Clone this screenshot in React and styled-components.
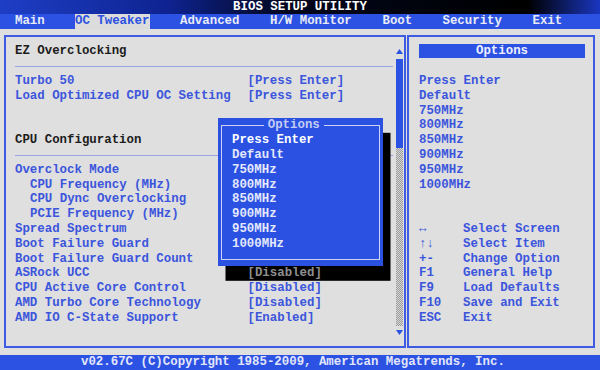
import React from 'react';
import styled, { createGlobalStyle } from 'styled-components';

const CW = 7.5;
const RH = 14.8;

const GlobalStyle = createGlobalStyle`
  html, body {
    margin: 0;
    padding: 0;
    background: #dfdfdf;
  }
  body {
    font-family: "Liberation Mono", "DejaVu Sans Mono", monospace;
    font-size: 12.4px;
    font-weight: 700;
  }
`;

const Screen = styled.div`
  position: relative;
  width: 600px;
  height: 370px;
  display: grid;
  grid-template-rows: 14px 15px 326px 15px;
  background: #dfdfdf;
  overflow: hidden;
`;

const TitleBar = styled.div`
  display: flex;
  justify-content: center;
  align-items: center;
  color: #ffffff;
  line-height: 14px;
  background: linear-gradient(90deg, #1e3ec6 0%, #0e2390 28%, #02061c 48%, #000 88%, #1a36c0 100%);
`;

const MenuBar = styled.div`
  display: grid;
  grid-template-columns: repeat(80, ${CW}px);
  align-items: stretch;
  background: #2b52e2;
  line-height: 15px;
`;

const MenuItem = styled.div`
  grid-column: ${p => p.$col + 1} / span ${p => p.$len};
  white-space: pre;
  color: ${p => (p.$active ? '#2b52e2' : '#e9ebf6')};
  background: ${p => (p.$active ? '#dcdcdc' : 'transparent')};
`;

const Main = styled.div`
  display: flex;
  padding: 6px 5px 7px 4px;
`;

const LeftPanel = styled.div`
  box-sizing: border-box;
  width: 402px;
  border: 2px solid #3d5ce3;
  padding: 7.4px 1px 0 9px;
  display: flex;
`;

const ItemList = styled.div`
  flex: 1;
  display: flex;
  flex-direction: column;
  padding-right: 3px;
`;

const Heading = styled.div`
  height: ${RH}px;
  line-height: ${RH}px;
  color: #1c1c1c;
`;

const Separator = styled.div`
  height: ${RH}px;
  display: flex;
  align-items: center;
  &::after {
    content: '';
    flex: 1;
    height: 1px;
    background: #97a4e6;
  }
`;

const Spacer = styled.div`
  height: ${p => p.$rows * RH}px;
`;

const Row = styled.div`
  display: grid;
  grid-template-columns: 232.5px 1fr;
  height: ${RH}px;
  line-height: ${RH}px;
  white-space: pre;
  color: #3b55dc;
`;

const Label = styled.span`
  padding-left: ${p => (p.$indent ? 2 * CW : 0)}px;
`;

const Value = styled.span`
  ${p => p.$shadow && `
    position: relative;
    z-index: 3;
    color: #8f8f8f;
  `}
`;

const ScrollBar = styled.div`
  width: 7px;
  display: flex;
  flex-direction: column;
  align-items: stretch;
`;

const ScrollArrow = styled.div`
  height: ${RH}px;
  display: flex;
  align-items: center;
  justify-content: center;
`;

const Thumb = styled.div`
  height: ${6 * RH}px;
  background: #2b52e2;
`;

const Track = styled.div`
  height: ${12 * RH}px;
  background: repeating-conic-gradient(#9c9c9c 0 25%, #d6d6d6 0 50%) 0 0 / 2px 2px;
`;

const RightPanel = styled.div`
  box-sizing: border-box;
  width: 188px;
  margin-left: 1px;
  border: 2px solid #3d5ce3;
  padding: 7.4px 8px 0 10px;
  display: flex;
  flex-direction: column;
  color: #3b55dc;
`;

const OptionsHeader = styled.div`
  height: 14px;
  line-height: 14px;
  text-align: center;
  color: #eef0ff;
  background: #2b52e2;
  margin-bottom: 0.8px;
`;

const Line = styled.div`
  height: ${RH}px;
  line-height: ${RH}px;
  white-space: pre;
`;

const HelpRow = styled.div`
  display: grid;
  grid-template-columns: 44px 1fr;
  height: ${RH}px;
  line-height: ${RH}px;
  white-space: pre;
`;

const Footer = styled.div`
  background: #2b52e2;
  color: #e3e6fb;
  line-height: 15px;
  white-space: pre;
  padding-left: 81px;
`;

const Popup = styled.div`
  position: absolute;
  left: 217.5px;
  top: 118.4px;
  width: 165px;
  height: 148px;
  box-sizing: border-box;
  padding: 0 3px 6.65px 3px;
  background: #2a51e2;
  box-shadow: ${CW}px ${RH}px 0 #000;
  z-index: 2;
  display: flex;
`;

const PopupFrame = styled.fieldset`
  flex: 1;
  margin: 0;
  min-width: 0;
  border: 1.5px solid #cdd2f2;
  padding: 0 8px 6.65px 10.5px;
`;

const PopupTitle = styled.legend`
  padding: 0 ${CW / 2}px;
  margin-left: 32px;
  height: ${RH}px;
  line-height: ${RH}px;
  color: #c3ccf4;
`;

const PopupItem = styled.div`
  height: ${RH}px;
  line-height: ${RH}px;
  color: ${p => (p.$active ? '#ffffff' : '#e4e8fb')};
`;

const Triangle = ({ up }) => (
  <svg width="7" height="5" viewBox="0 0 7 5">
    <polygon points={up ? '3.5,0 7,5 0,5' : '0,0 7,0 3.5,5'} fill="#2b52e2" />
  </svg>
);

const menu = [
  { name: 'Main', col: 2 },
  { name: 'OC Tweaker', col: 10, active: true },
  { name: 'Advanced', col: 24 },
  { name: 'H/W Monitor', col: 36 },
  { name: 'Boot', col: 51 },
  { name: 'Security', col: 59 },
  { name: 'Exit', col: 71 },
];

const cpuRows = [
  { label: 'Overclock Mode' },
  { label: 'CPU Frequency (MHz)', indent: true },
  { label: 'CPU Dync Overclocking', indent: true },
  { label: 'PCIE Frequency (MHz)', indent: true },
  { label: 'Spread Spectrum' },
  { label: 'Boot Failure Guard' },
  { label: 'Boot Failure Guard Count' },
  { label: 'ASRock UCC', value: '[Disabled]', shadow: true },
  { label: 'CPU Active Core Control', value: '[Disabled]' },
  { label: 'AMD Turbo Core Technology', value: '[Disabled]' },
  { label: 'AMD IO C-State Support', value: '[Enabled]' },
];

const options = ['Press Enter', 'Default', '750MHz', '800MHz', '850MHz', '900MHz', '950MHz', '1000MHz'];

const help = [
  ['↔', 'Select Screen'],
  ['↑↓', 'Select Item'],
  ['+-', 'Change Option'],
  ['F1', 'General Help'],
  ['F9', 'Load Defaults'],
  ['F10', 'Save and Exit'],
  ['ESC', 'Exit'],
];

export default function App() {
  return (
    <Screen>
      <GlobalStyle />
      <TitleBar>BIOS SETUP UTILITY</TitleBar>
      <MenuBar>
        {menu.map(m => (
          <MenuItem key={m.name} $col={m.col} $len={m.name.length} $active={m.active}>
            {m.name}
          </MenuItem>
        ))}
      </MenuBar>

      <Main>
        <LeftPanel>
          <ItemList>
            <Heading>EZ Overclocking</Heading>
            <Separator />
            <Row>
              <Label>Turbo 50</Label>
              <Value>[Press Enter]</Value>
            </Row>
            <Row>
              <Label>Load Optimized CPU OC Setting</Label>
              <Value>[Press Enter]</Value>
            </Row>
            <Spacer $rows={2} />
            <Heading>CPU Configuration</Heading>
            <Separator />
            {cpuRows.map(r => (
              <Row key={r.label}>
                <Label $indent={r.indent}>{r.label}</Label>
                <Value $shadow={r.shadow}>{r.value || ''}</Value>
              </Row>
            ))}
          </ItemList>
          <ScrollBar>
            <ScrollArrow><Triangle up /></ScrollArrow>
            <Thumb />
            <Track />
            <ScrollArrow><Triangle /></ScrollArrow>
          </ScrollBar>
        </LeftPanel>

        <RightPanel>
          <OptionsHeader>Options</OptionsHeader>
          <Spacer $rows={1} />
          {options.map(o => (
            <Line key={o}>{o}</Line>
          ))}
          <Spacer $rows={2} />
          {help.map(([k, d]) => (
            <HelpRow key={d}>
              <span>{k}</span>
              <span>{d}</span>
            </HelpRow>
          ))}
        </RightPanel>
      </Main>

      <Footer>v02.67C (C)Copyright 1985-2009, American Megatrends, Inc.</Footer>

      <Popup>
        <PopupFrame>
          <PopupTitle>Options</PopupTitle>
          {options.map((o, i) => (
            <PopupItem key={o} $active={i === 0}>{o}</PopupItem>
          ))}
        </PopupFrame>
      </Popup>
    </Screen>
  );
}
